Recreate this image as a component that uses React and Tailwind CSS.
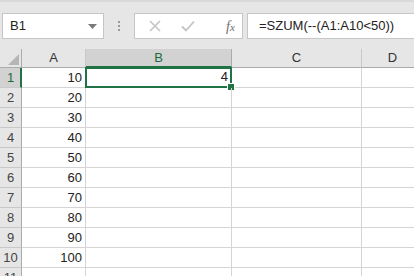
import React from 'react';

const rows = [10, 20, 30, 40, 50, 60, 70, 80, 90, 100, null];
const cols = ['A', 'B', 'C', 'D'];

const App = () => {
  return (
    <div className="w-[414px] h-[276px] overflow-hidden bg-[#e6e6e6] font-['Liberation_Sans',sans-serif] text-[13px] text-[#222]">
      {/* formula bar */}
      <div className="h-[49px] border-t-2 border-[#d9d9d9] pt-[11px] flex items-start">
        <div className="ml-[2px] w-[102px] h-[26px] bg-white border border-[#c6c6c6] flex items-center justify-between pl-[7px] pr-[6px]">
          <span>B1</span>
          <svg width="9" height="5" viewBox="0 0 9 5"><path d="M0 0h9L4.5 5z" fill="#7a7a7a" /></svg>
        </div>
        <div className="w-[30px] h-[26px] flex flex-col items-center justify-center gap-[2px]">
          <div className="w-[2px] h-[2px] bg-[#9a9a9a]" />
          <div className="w-[2px] h-[2px] bg-[#9a9a9a]" />
          <div className="w-[2px] h-[2px] bg-[#9a9a9a]" />
        </div>
        <div className="w-[109px] h-[26px] bg-white border border-[#c6c6c6] flex items-center pl-[14px]">
          <svg width="12" height="12" viewBox="0 0 12 12"><path d="M1 1l10 10M11 1L1 11" stroke="#c4c4c4" strokeWidth="1.6" /></svg>
          <svg className="ml-[20px]" width="14" height="12" viewBox="0 0 14 12"><path d="M1 6.5l4 4L13 1.5" stroke="#c4c4c4" strokeWidth="1.8" fill="none" /></svg>
          <span className="ml-[31px] font-['Liberation_Serif',serif] italic text-[14px] text-[#6e6e6e]">f<span className="text-[11px]">x</span></span>
        </div>
        <div className="ml-[4px] flex-1 h-[26px] bg-white border border-r-0 border-[#c6c6c6] flex items-center pl-[11px]">
          =SZUM(--(A1:A10&lt;50))
        </div>
      </div>

      {/* sheet */}
      <div className="grid grid-cols-[22px_64px_146px_130px_62px] auto-rows-[20px] grid-rows-[19px] bg-white">
        <div className="relative bg-[#e6e6e6] border-r border-b border-[#ababab]">
          <svg className="absolute right-[2px] bottom-[2px]" width="11" height="11" viewBox="0 0 11 11"><path d="M11 0v11H0z" fill="#b5b5b5" /></svg>
        </div>
        {cols.map((c) => (
          <div
            key={c}
            className={
              c === 'B'
                ? 'bg-[#d2d2d2] border-r border-[#ababab] border-b-2 border-b-[#217346] text-[#1d6a3f] flex items-center justify-center pt-[1px]'
                : 'bg-[#e6e6e6] border-r border-b border-[#ababab] border-r-[#c8c8c8] text-[#333] flex items-center justify-center'
            }
          >
            {c}
          </div>
        ))}
        {rows.map((v, i) => (
          <React.Fragment key={i}>
            <div
              className={
                i === 0
                  ? 'bg-[#d2d2d2] border-b border-[#c8c8c8] border-r-2 border-r-[#217346] text-[#1d6a3f] flex items-center justify-center pl-[1px]'
                  : 'bg-[#e6e6e6] border-b border-[#c8c8c8] border-r border-r-[#ababab] text-[#444] flex items-center justify-center'
              }
            >
              {i + 1}
            </div>
            <div className="border-r border-b border-[#d4d4d4] flex items-center justify-end pr-[3px]">{v}</div>
            <div className="relative border-r border-b border-[#d4d4d4] flex items-center justify-end pr-[3px]">
              {i === 0 && (
                <>
                  <span className="relative top-[-1px]">4</span>
                  <div className="absolute -left-px -top-px -right-px -bottom-px border-2 border-[#217346]" />
                  <div className="absolute right-[-4px] bottom-[-4px] w-[6px] h-[6px] bg-[#217346] border border-white box-content" />
                </>
              )}
            </div>
            <div className="border-r border-b border-[#d4d4d4]" />
            <div className="border-b border-[#d4d4d4]" />
          </React.Fragment>
        ))}
      </div>
    </div>
  );
};

export default App;
